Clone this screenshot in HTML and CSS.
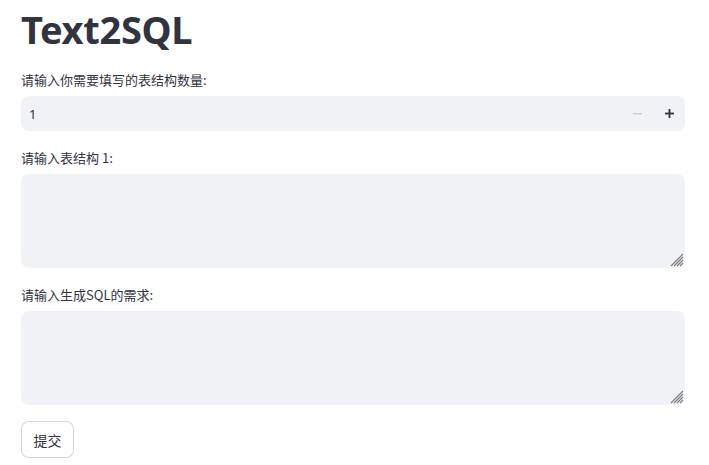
FILE: index.html
```html
<!DOCTYPE html>
<html lang="zh">
<head>
<meta charset="utf-8">
<link rel="stylesheet" href="styles.css">
</head>
<body>
<main class="app">
  <h1 class="title">Text2SQL</h1>

  <div class="field">
    <label class="label">请输入你需要填写的表结构数量:</label>
    <div class="number">
      <span class="number-value">1</span>
      <div class="steppers">
        <button class="step step-disabled" aria-label="decrement">
          <svg width="9" height="9" viewBox="0 0 9 9"><rect x="0" y="4" width="9" height="1.4" fill="currentColor"/></svg>
        </button>
        <button class="step" aria-label="increment">
          <svg width="9" height="9" viewBox="0 0 9 9"><rect x="0" y="3.6" width="9" height="1.8" fill="currentColor"/><rect x="3.6" y="0" width="1.8" height="9" fill="currentColor"/></svg>
        </button>
      </div>
    </div>
  </div>

  <div class="field">
    <label class="label">请输入表结构 1:</label>
    <div class="area-wrap">
      <textarea class="area"></textarea>
      <svg class="grip" width="14" height="14" viewBox="0 0 14 14">
        <path d="M13 1 L1 13 M13 4 L4 13 M13 7 L7 13 M13 10 L10 13" stroke="#7a7b82" stroke-width="1.1" fill="none"/>
      </svg>
    </div>
  </div>

  <div class="field">
    <label class="label">请输入生成SQL的需求:</label>
    <div class="area-wrap">
      <textarea class="area"></textarea>
      <svg class="grip" width="14" height="14" viewBox="0 0 14 14">
        <path d="M13 1 L1 13 M13 4 L4 13 M13 7 L7 13 M13 10 L10 13" stroke="#7a7b82" stroke-width="1.1" fill="none"/>
      </svg>
    </div>
  </div>

  <div class="actions">
    <button class="submit">提交</button>
  </div>
</main>
</body>
</html>
```
FILE: styles.css
```css
* { box-sizing: border-box; }
html, body {
  margin: 0;
  padding: 0;
  background: #ffffff;
}
body {
  font-family: "Noto Sans", "Noto Sans CJK SC", sans-serif;
  color: rgb(49, 51, 63);
}
.app {
  display: flex;
  flex-direction: column;
  padding: 6px 24px 0 21px;
  gap: 19px;
}
.title {
  margin: 0;
  font-family: "Noto Sans", "Noto Sans CJK SC", sans-serif;
  font-weight: 700;
  font-size: 38px;
  line-height: 47px;
  letter-spacing: -0.3px;
  color: rgb(49, 51, 63);
}
.field {
  display: flex;
  flex-direction: column;
  gap: 8px;
}
.label {
  font-family: "Noto Sans CJK SC", sans-serif;
  font-size: 13px;
  line-height: 16px;
  height: 16px;
  color: rgb(49, 51, 63);
}
.number {
  display: flex;
  align-items: center;
  height: 35px;
  background: #f0f2f6;
  border-radius: 8px;
  padding-left: 8px;
}
.number-value {
  flex: 1;
  font-family: "Noto Sans", sans-serif;
  font-size: 13px;
  color: rgb(49, 51, 63);
}
.steppers {
  display: flex;
  height: 100%;
}
.step {
  width: 32px;
  height: 100%;
  border: none;
  background: transparent;
  display: flex;
  align-items: center;
  justify-content: center;
  color: rgb(49, 51, 63);
  padding: 0;
  border-radius: 0 8px 8px 0;
}
.step-disabled {
  color: rgba(49, 51, 63, 0.2);
  border-radius: 0;
}
.area-wrap {
  position: relative;
}
.area {
  display: block;
  width: 100%;
  height: 94px;
  background: #f0f2f6;
  border: none;
  border-radius: 8px;
  resize: none;
  padding: 8px;
  font-family: "Noto Sans", sans-serif;
  font-size: 13px;
}
.grip {
  position: absolute;
  right: 1px;
  bottom: 1px;
  pointer-events: none;
}
.actions {
  display: flex;
  margin-top: -3px;
}
.submit {
  width: 53px;
  height: 37px;
  background: #ffffff;
  border: 1px solid rgba(49, 51, 63, 0.2);
  border-radius: 8px;
  font-family: "Noto Sans CJK SC", sans-serif;
  font-size: 14px;
  color: rgb(49, 51, 63);
  padding: 0;
}
```
